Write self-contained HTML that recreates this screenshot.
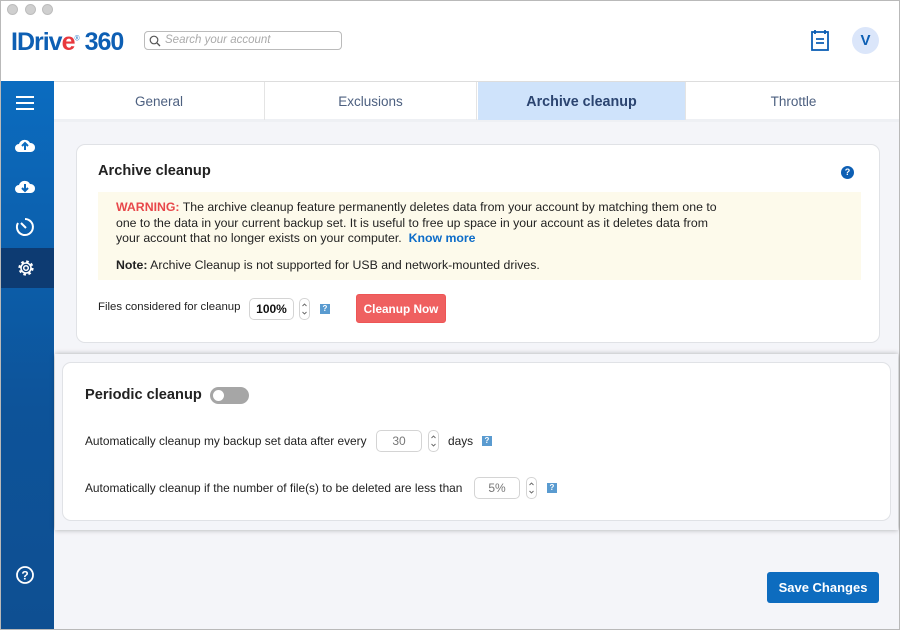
<!DOCTYPE html>
<html><head><style>
*{box-sizing:border-box;margin:0;padding:0}
body{width:900px;height:630px;font-family:"Liberation Sans",Arial,sans-serif;background:#fff;position:relative;overflow:hidden;color:#222}
.win{position:absolute;left:0;top:0;width:900px;height:630px;border:1px solid #b9b9b9}
.dot{position:absolute;top:4px;width:11px;height:11px;border-radius:50%;background:#cfcfcf;border:1px solid #bdbdbd}
.abs{position:absolute}
.side{position:absolute;left:1px;top:81px;width:53px;height:548px;background:linear-gradient(#0b6cc0,#0d5399 60%,#0e4f92)}
.tabs{position:absolute;left:54px;top:81px;width:845px;height:41px;background:#fff;border-top:1px solid #ddd;border-bottom:3px solid #eef0f4}
.tab{position:absolute;top:0;height:38px;line-height:40px;text-align:center;font-size:13.5px;color:#4d6080;border-right:1px solid #e4e4e4}
.main{position:absolute;left:54px;top:122px;width:845px;height:507px;background:#f4f5f9}
.card{position:absolute;background:#fff;border:1px solid #e0e2e6;border-radius:9px}
.t{position:absolute;font-size:11.9px;color:#222;white-space:nowrap}
.inp{position:absolute;height:22px;border:1px solid #d4d4d4;border-radius:5px;background:#fff;font-size:12px;text-align:center;line-height:20px}
.spin{position:absolute;width:11px;height:22px;border:1px solid #d4d4d4;border-radius:5px;background:#fff}
.q{position:absolute;width:10px;height:10px;background:#5a9bd0;color:#fff;font-size:8px;line-height:10px;text-align:center;font-weight:bold}
</style></head><body>
<div class="win"></div>
<div class="dot" style="left:7px"></div><div class="dot" style="left:25px"></div><div class="dot" style="left:42px"></div>
<div class="abs" style="left:11px;top:28px;font-size:25px;font-weight:bold;color:#0d5fb4;letter-spacing:-1px">IDriv<span style="color:#e8383d">e</span><sup style="font-size:7px;color:#4a8fd0">®</sup> 360</div>
<div class="abs" style="left:144px;top:31px;width:198px;height:19px;border:1px solid #bbb;border-radius:4px;font-size:11.5px;font-style:italic;color:#aaa;padding-left:20px;line-height:17px">Search your account
<svg class="abs" style="left:4px;top:3px" width="12" height="12"><circle cx="5" cy="5" r="3.8" fill="none" stroke="#555" stroke-width="1.2"/><path d="M8 8l3 3" stroke="#555" stroke-width="1.3"/></svg></div>
<svg class="abs" style="left:810px;top:29px" width="22" height="23"><rect x="2" y="3" width="16" height="18" fill="none" stroke="#0d5fb4" stroke-width="1.8"/><path d="M5 1v4M15 1v4M6 10h8M6 14h8" stroke="#0d5fb4" stroke-width="1.8"/></svg>
<div class="abs" style="left:852px;top:27px;width:27px;height:27px;border-radius:50%;background:#dbe6fa;color:#0d5fb4;font-weight:bold;font-size:15px;text-align:center;line-height:27px">V</div>
<div class="side">
<svg class="abs" style="left:14px;top:14px" width="20" height="16"><path d="M1 2h18M1 8h18M1 14h18" stroke="#fff" stroke-width="2"/></svg>
<div class="abs" style="left:0;top:167px;width:53px;height:40px;background:#0d3b72"></div>
<svg class="abs" style="left:13px;top:56px" width="22" height="16"><path d="M5 15a4 4 0 0 1 0-8 6 6 0 0 1 11-1 4.5 4.5 0 0 1 1 9z" fill="#fff"/><path d="M11 13V7M8 9l3-3 3 3" stroke="#0b6cc0" stroke-width="2" fill="none"/></svg>
<svg class="abs" style="left:13px;top:97px" width="22" height="16"><path d="M5 15a4 4 0 0 1 0-8 6 6 0 0 1 11-1 4.5 4.5 0 0 1 1 9z" fill="#fff"/><path d="M11 6v6M8 10l3 3 3-3" stroke="#0b66b8" stroke-width="2" fill="none"/></svg>
<svg class="abs" style="left:14px;top:136px" width="22" height="22"><path d="M10 2a8 8 0 1 1-7 4" fill="none" stroke="#fff" stroke-width="2"/><path d="M6 6l5 5" stroke="#fff" stroke-width="2"/></svg>
<svg class="abs" style="left:14px;top:176px" width="22" height="22" viewBox="0 0 22 22"><circle cx="11" cy="11" r="6.5" fill="none" stroke="#fff" stroke-width="2.2" stroke-dasharray="2.6 2.5"/><circle cx="11" cy="11" r="5" fill="none" stroke="#fff" stroke-width="1.6"/><circle cx="11" cy="11" r="2.3" fill="none" stroke="#fff" stroke-width="1.5"/></svg>
<svg class="abs" style="left:14px;top:484px" width="20" height="20"><circle cx="10" cy="10" r="8" fill="none" stroke="#fff" stroke-width="1.8"/><text x="10" y="14.5" font-size="12" font-weight="bold" fill="#fff" text-anchor="middle" font-family="Liberation Sans">?</text></svg>
</div>
<div class="tabs">
<div class="tab" style="left:0;width:211px">General</div>
<div class="tab" style="left:211px;width:212px">Exclusions</div>
<div class="tab" style="left:424px;width:208px;background:#cfe3fb;color:#2b4470;font-size:14.3px;font-weight:bold">Archive cleanup</div>
<div class="tab" style="left:634px;width:211px;border:0">Throttle</div>
</div>
<div class="main"></div>
<div class="card" style="left:76px;top:144px;width:804px;height:199px"></div>
<div class="abs" style="left:98px;top:163px;font-size:14.6px;font-weight:bold;color:#222">Archive cleanup</div>
<div class="abs" style="left:841px;top:166px;width:13px;height:13px;border-radius:50%;background:#0d5fb4;color:#fff;font-size:9px;font-weight:bold;text-align:center;line-height:13px">?</div>
<div class="abs" style="left:98px;top:192px;width:763px;height:88px;background:#fdfaeb"></div>
<div class="t" style="left:116px;top:200px;line-height:15.5px;font-size:12.3px"><b style="color:#e8484b">WARNING:</b> The archive cleanup feature permanently deletes data from your account by matching them one to<br>one to the data in your current backup set. It is useful to free up space in your account as it deletes data from<br>your account that no longer exists on your computer. &nbsp;<b style="color:#0d6cc8">Know more</b></div>
<div class="t" style="left:116px;top:258px;font-size:12.3px"><b>Note:</b> Archive Cleanup is not supported for USB and network-mounted drives.</div>
<div class="t" style="left:98px;top:301px;font-size:11.4px">Files considered for cleanup</div>
<div class="inp" style="left:249px;top:298px;width:45px;font-weight:bold;color:#111">100%</div>
<div class="spin" style="left:299px;top:298px"><svg width="9" height="20"><path d="M2.5 7l2-2 2 2M2.5 13l2 2 2-2" fill="none" stroke="#666" stroke-width="0.9"/></svg></div>
<div class="q" style="left:320px;top:304px">?</div>
<div class="abs" style="left:356px;top:294px;width:90px;height:29px;background:#ef6060;border:1px solid #e55;border-radius:3px;color:#fff;font-size:11.8px;font-weight:bold;text-align:center;line-height:28px">Cleanup Now</div>
<div class="abs" style="left:55px;top:354px;width:843px;height:176px;background:#f4f5f9;box-shadow:0 0 5px rgba(0,0,0,.3)"></div>
<div class="card" style="left:62px;top:362px;width:829px;height:159px"></div>
<div class="abs" style="left:85px;top:387px;font-size:14.6px;font-weight:bold;color:#222">Periodic cleanup</div>
<div class="abs" style="left:210px;top:387px;width:39px;height:17px;border-radius:9px;background:#a6a6a6"><div class="abs" style="left:3px;top:3px;width:11px;height:11px;border-radius:50%;background:#fff"></div></div>
<div class="t" style="left:85px;top:434px">Automatically cleanup my backup set data after every</div>
<div class="inp" style="left:376px;top:430px;width:46px;color:#777">30</div>
<div class="spin" style="left:428px;top:430px"><svg width="9" height="20"><path d="M2.5 7l2-2 2 2M2.5 13l2 2 2-2" fill="none" stroke="#666" stroke-width="0.9"/></svg></div>
<div class="t" style="left:448px;top:434px">days</div>
<div class="q" style="left:482px;top:436px">?</div>
<div class="t" style="left:85px;top:481px">Automatically cleanup if the number of file(s) to be deleted are less than</div>
<div class="inp" style="left:474px;top:477px;width:46px;color:#777">5%</div>
<div class="spin" style="left:526px;top:477px"><svg width="9" height="20"><path d="M2.5 7l2-2 2 2M2.5 13l2 2 2-2" fill="none" stroke="#666" stroke-width="0.9"/></svg></div>
<div class="q" style="left:547px;top:483px">?</div>
<div class="abs" style="left:767px;top:572px;width:112px;height:31px;background:#0d6cbf;border-radius:3px;color:#fff;font-size:13px;font-weight:bold;text-align:center;line-height:31px">Save Changes</div>
</body></html>
